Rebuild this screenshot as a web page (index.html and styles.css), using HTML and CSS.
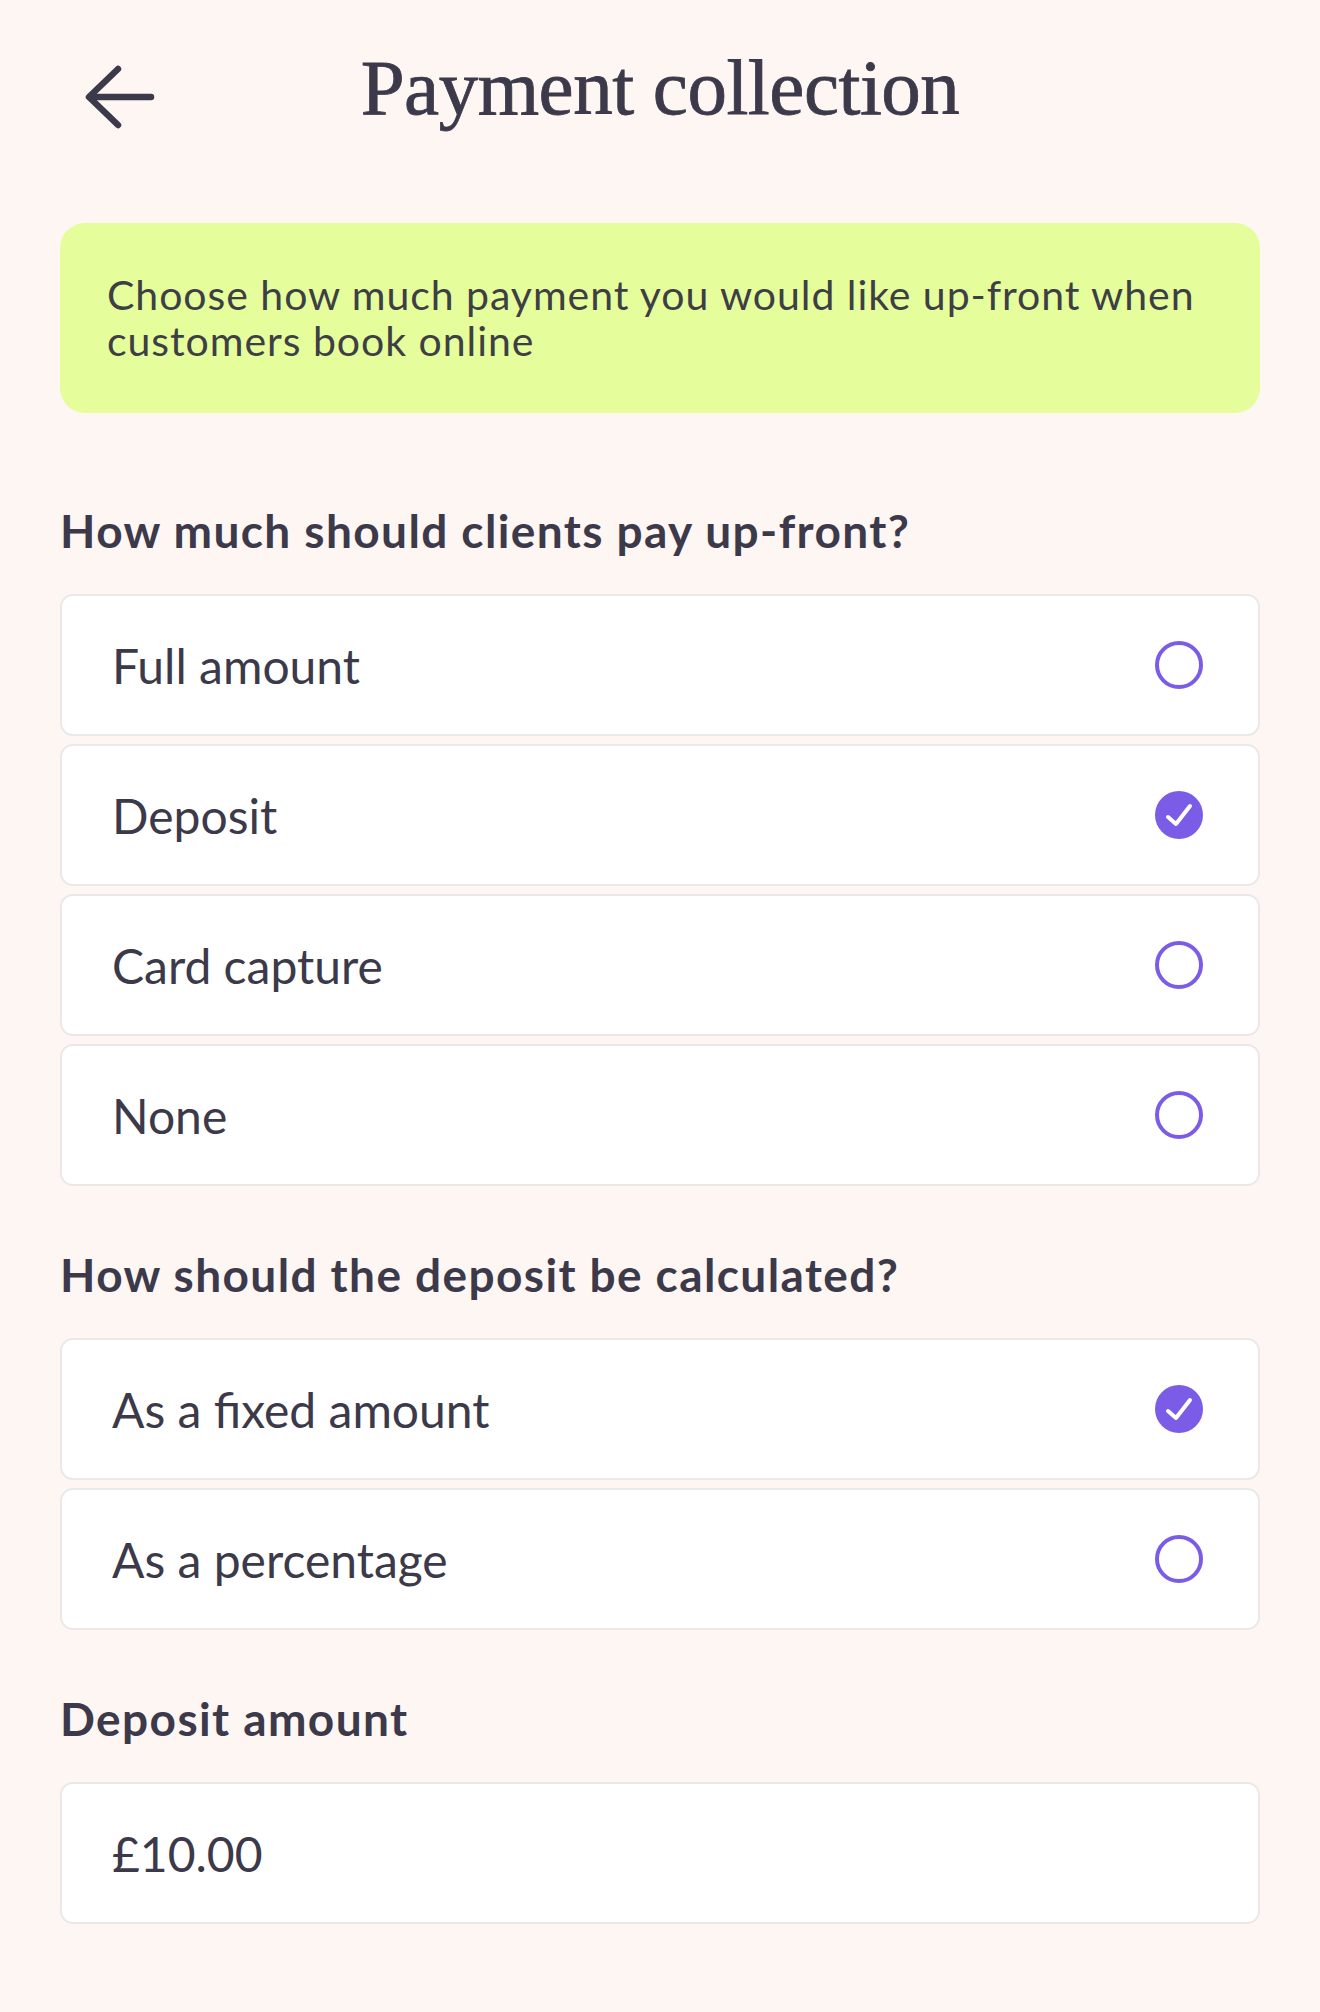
FILE: index.html
```html
<!DOCTYPE html>
<html lang="en">
<head>
<meta charset="utf-8">
<title>Payment collection</title>
<link rel="stylesheet" href="styles.css">
</head>
<body>
<main class="page">
  <header class="topbar">
    <button class="back" aria-label="Back">
      <svg width="80" height="66" viewBox="0 0 80 66" fill="none" stroke="currentColor" stroke-width="6.5" stroke-linecap="round" stroke-linejoin="round">
        <path d="M38 5 L9 33 L38 61"/>
        <path d="M10 33 H71"/>
      </svg>
    </button>
    <h1 class="title">Payment collection</h1>
    <span class="spacer"></span>
  </header>

  <div class="notice">Choose how much payment you would like up-front when customers book online</div>

  <section class="group">
    <h2 class="label">How much should clients pay up-front?</h2>
    <div class="options">
      <div class="option"><span>Full amount</span><span class="radio"></span></div>
      <div class="option"><span>Deposit</span><span class="radio checked"><svg viewBox="0 0 48 48" width="48" height="48"><circle cx="24" cy="24" r="24" fill="#7a5ce6"/><path d="M13 26 L21 33 L35 15" fill="none" stroke="#fff" stroke-width="4" stroke-linecap="round" stroke-linejoin="round"/></svg></span></div>
      <div class="option"><span>Card capture</span><span class="radio"></span></div>
      <div class="option"><span>None</span><span class="radio"></span></div>
    </div>
  </section>

  <section class="group">
    <h2 class="label">How should the deposit be calculated?</h2>
    <div class="options">
      <div class="option"><span>As a fixed amount</span><span class="radio checked"><svg viewBox="0 0 48 48" width="48" height="48"><circle cx="24" cy="24" r="24" fill="#7a5ce6"/><path d="M13 26 L21 33 L35 15" fill="none" stroke="#fff" stroke-width="4" stroke-linecap="round" stroke-linejoin="round"/></svg></span></div>
      <div class="option"><span>As a percentage</span><span class="radio"></span></div>
    </div>
  </section>

  <section class="group">
    <h2 class="label">Deposit amount</h2>
    <div class="field">£10.00</div>
  </section>
</main>
</body>
</html>
```

FILE: styles.css
```css
* { box-sizing: border-box; }

html, body {
  margin: 0;
  background: #fdf6f3;
}

body {
  font-family: "Lato", "Noto Sans", sans-serif;
  color: #3c3a4a;
}

.page {
  width: 1200px;
  margin: 0 auto;
  padding-bottom: 88px;
}

/* top bar: back arrow + centred title */
.topbar {
  display: grid;
  grid-template-columns: 1fr auto 1fr;
  padding-top: 43px;
}

.back {
  justify-self: start;
  align-self: start;
  margin: 21px 0 0 20px;
  padding: 0;
  border: 0;
  background: none;
  color: #3c3a4a;
  display: flex;
}

.title {
  margin: 0;
  font-family: "Liberation Serif", serif;
  font-weight: normal;
  font-size: 79px;
  line-height: 90px;
  color: #3c3a4a;
  -webkit-text-stroke: 0.8px #3c3a4a;
  letter-spacing: -0.5px;
}

/* lime info banner */
.notice {
  margin-top: 90px;
  height: 190px;
  padding: 49px 47px;
  background: #e5fd9b;
  border-radius: 25px;
  font-size: 41px;
  line-height: 46px;
  letter-spacing: 0.95px;
  color: #3e3f45;
}

.group { margin-top: 90px; }
.group + .group { margin-top: 61px; }

.label {
  margin: 0 0 35px;
  font-size: 46px;
  line-height: 56px;
  font-weight: 700;
  letter-spacing: 1.4px;
  color: #3c3a4a;
}

.options {
  display: flex;
  flex-direction: column;
  gap: 8px;
}

.option, .field {
  height: 142px;
  display: flex;
  align-items: center;
  justify-content: space-between;
  padding: 0 55px 0 50px;
  background: #fff;
  border: 2px solid #ebe8e8;
  border-radius: 13px;
  font-size: 48px;
  color: #3c3a4a;
}

.radio {
  width: 48px;
  height: 48px;
  border-radius: 50%;
  border: 4px solid #7a5ce6;
  display: flex;
}

.radio.checked { border: 0; }
```
